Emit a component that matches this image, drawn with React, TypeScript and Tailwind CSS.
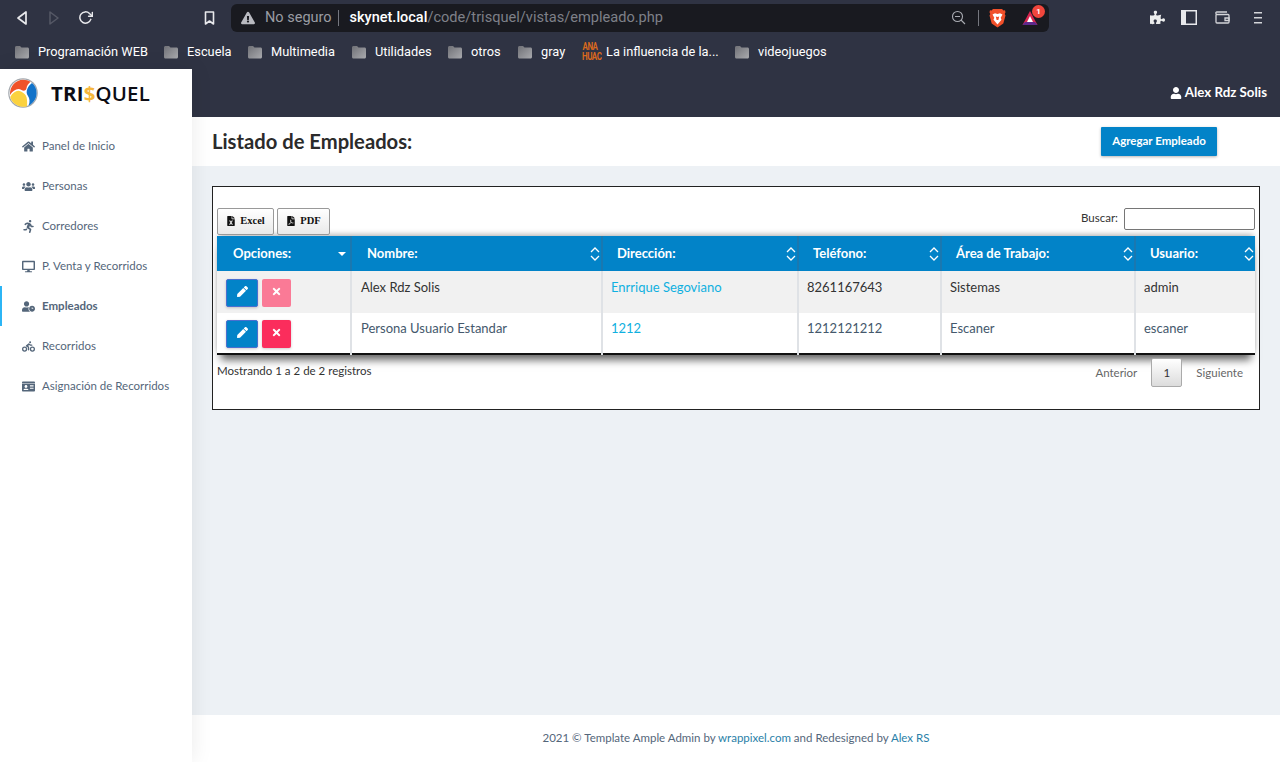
import {
  FaHome,
  FaUsers,
  FaRunning,
  FaDesktop,
  FaUserClock,
  FaBiking,
  FaIdCard,
  FaUser,
  FaPen,
  FaTimes,
  FaFileExcel,
  FaFilePdf,
  FaPuzzlePiece,
  FaExclamationTriangle,
} from "react-icons/fa";
import { FiRotateCw } from "react-icons/fi";

const bookmarks = [
  { label: "Programación WEB", width: "w-[149px]" },
  { label: "Escuela", width: "w-[84px]" },
  { label: "Multimedia", width: "w-[104px]" },
  { label: "Utilidades", width: "w-[96px]" },
  { label: "otros", width: "w-[70px]" },
];

const menu = [
  { label: "Panel de Inicio", icon: FaHome },
  { label: "Personas", icon: FaUsers },
  { label: "Corredores", icon: FaRunning },
  { label: "P. Venta y Recorridos", icon: FaDesktop },
  { label: "Empleados", icon: FaUserClock, active: true },
  { label: "Recorridos", icon: FaBiking },
  { label: "Asignación de Recorridos", icon: FaIdCard },
];

const columns = [
  { label: "Opciones:", width: "w-[134px]", pad: "pl-[16px]", sorted: true },
  { label: "Nombre:", width: "w-[251px]", pad: "border-l-2 border-[#1a78b0] pl-[15px]" },
  { label: "Dirección:", width: "w-[196px]", pad: "border-l-2 border-[#1a78b0] pl-[14px]" },
  { label: "Teléfono:", width: "w-[143px]", pad: "border-l-2 border-[#1a78b0] pl-[14px]" },
  { label: "Área de Trabajo:", width: "w-[194px]", pad: "border-l-2 border-[#1a78b0] pl-[14px]" },
  { label: "Usuario:", width: "w-[120px]", pad: "border-l-2 border-[#1a78b0] pl-[14px]" },
];

const rows = [
  {
    nombre: "Alex Rdz Solis",
    direccion: "Enrrique Segoviano",
    telefono: "8261167643",
    area: "Sistemas",
    usuario: "admin",
  },
  {
    nombre: "Persona Usuario Estandar",
    direccion: "1212",
    telefono: "1212121212",
    area: "Escaner",
    usuario: "escaner",
  },
];

function SortIcon() {
  return (
    <svg width="10" height="16" viewBox="0 0 10 16" fill="none" stroke="white" strokeWidth="1.3" className="absolute right-[1px] top-[10px]">
      <path d="M1 6l4-4 4 4" />
      <path d="M1 10l4 4 4-4" />
    </svg>
  );
}

function Folder() {
  return (
    <svg width="16" height="14" viewBox="0 0 16 14" className="shrink-0">
      <defs>
        <linearGradient id="folderFill" x1="0" y1="0" x2="1" y2="1">
          <stop offset="0" stopColor="#6f7076" />
          <stop offset="1" stopColor="#a9aaae" />
        </linearGradient>
      </defs>
      <path d="M1 2.500C1 1.700 1.600 1 2.500 1h3.500l1.500 1.500h6c.9 0 1.500.6 1.500 1.500v8c0 .9-.6 1.500-1.500 1.500h-11C1.600 13.500 1 12.900 1 12z" fill="url(#folderFill)" />
    </svg>
  );
}

function Logo() {
  return (
    <svg width="30" height="30" viewBox="0 0 30 30">
      <circle cx="15" cy="15" r="14.800" fill="#a3a8ae" />
      <circle cx="15" cy="15" r="13.600" fill="white" />
      <path d="M2 17C1.500 8 8 2 15 1.800c3 0 5.500.7 7.500 2-2 1.700-3.800 4-4 6.500-.2 2.500-3 3.200-5 1.700-4-2.500-8.500.5-11.500 5z" fill="#f0532a" />
      <path d="M24 5c3 2.500 4.800 6 4.600 10.500-.2 5.500-3.500 10-8.100 12 1.700-3.500 1.200-7-.5-9.500-2-2.700-1.500-5-.5-7.500.8-2 2.500-4 4.500-5.500z" fill="#1273c9" />
      <path d="M2.200 19c3-5 7-7.500 10.800-5.500 3 1.500 4.800 3 5.600 6 .6 2.800.7 5.500.4 8.700-2 .6-4.500.7-6.500.2C8 27.500 3.500 24 2.200 19z" fill="#fbd23f" />
    </svg>
  );
}

function Brave() {
  return (
    <svg width="17" height="20" viewBox="0 0 17 20">
      <path d="M4 1h9l1.500 1.500 1.500-.3.5 2-.8 1.800.8 1.500-2.200 8-5.800 4-5.800-4L.5 7.500l.8-1.500L.5 4.200l.5-2 1.500.3z" fill="#f1502a" />
      <path d="M3.500 6.500l2.500-1.200 2.500.7 2.500-.7 2.500 1.200-1.800 3.200.8 2L8.500 16.500 4.500 11.700l.8-2z" fill="#fff" />
      <path d="M6.800 8.500l1.700.6 1.700-.6-.8 3.500h-1.800z" fill="#f1502a" />
    </svg>
  );
}

function ChromeBars() {
  return (
    <div className="bg-[#2f3343] h-[69px] text-white">
      <div className="flex items-center h-[35px]">
        <div className="flex items-center w-[231px] pl-[16px]">
          <svg width="12" height="16" viewBox="0 0 12 16" fill="none" stroke="#e8e9ec" strokeWidth="1.7" strokeLinejoin="round">
            <path d="M10 2v12L2 8z" />
          </svg>
          <svg width="12" height="16" viewBox="0 0 12 16" fill="none" stroke="#565966" strokeWidth="1.5" strokeLinejoin="round" className="ml-[20px]">
            <path d="M2 2v12l8-6z" />
          </svg>
          <FiRotateCw className="ml-[18px] text-[15px] text-[#e8e9ec]" strokeWidth={2.4} />
          <svg width="11" height="14" viewBox="0 0 11 14" fill="none" stroke="#e8e9ec" strokeWidth="1.6" strokeLinejoin="round" className="ml-[111px]">
            <path d="M1.500 1h8v12l-4-3-4 3z" />
          </svg>
        </div>
        <div className="flex items-center w-[818px] h-[28px] rounded-[6px] bg-[#191a20] font-['Roboto',sans-serif] text-[14px]">
          <FaExclamationTriangle className="ml-[10px] text-[14px] text-[#b9bac0]" />
          <span className="ml-[10px] text-[#9a9ca3] text-[14.500px]">No seguro</span>
          <span className="ml-[6px] w-px h-[16px] bg-[#75777f]"></span>
          <span className="ml-[11px] text-white font-medium text-[14.500px]">skynet.local</span>
          <span className="text-[#7e8088] text-[14.600px]">/code/trisquel/vistas/empleado.php</span>
          <span className="flex-1"></span>
          <svg width="15" height="15" viewBox="0 0 15 15" fill="none" stroke="#a9abb2" strokeWidth="1.1" className="-ml-[2px]">
            <circle cx="6.500" cy="6.500" r="5" />
            <path d="M4 6.500h5M10 10l4 4" />
          </svg>
          <span className="ml-[12px] w-px h-[16px] bg-[#75777f]"></span>
          <span className="ml-[10px] flex">
            <Brave />
          </span>
          <span className="relative ml-[16px] mr-[11px] flex">
            <svg width="16" height="16" viewBox="0 0 16 16">
              <path d="M8 1l7.500 14H.5z" fill="#d8264f" />
              <path d="M.5 15l2.500-3h10l2.500 3z" fill="#5d2a8c" />
              <path d="M8 6l3 6H5z" fill="white" />
            </svg>
            <span className="absolute -right-[7px] -top-[5px] w-[13px] h-[13px] rounded-full bg-[#f0463c] text-white text-[8px] leading-[13px] text-center font-bold">1</span>
          </span>
        </div>
        <FaPuzzlePiece className="ml-[101px] text-[15px] text-[#eceded]" />
        <svg width="16" height="15" viewBox="0 0 16 15" className="ml-[16px]">
          <rect x=".75" y=".75" width="14.500" height="13.500" fill="none" stroke="#e8e9ec" strokeWidth="1.500" />
          <rect x="1" y="1" width="4" height="13" fill="#e8e9ec" />
        </svg>
        <svg width="15" height="13" viewBox="0 0 15 13" fill="none" stroke="#d4d5d9" strokeWidth="1.300" className="ml-[18px]">
          <path d="M1 3.500V11a1 1 0 001 1h11a1 1 0 001-1V4.500a1 1 0 00-1-1H2a1 1 0 01-1-1 1 1 0 011-1.500h10" />
          <path d="M10 7h4v2.500h-4z" />
        </svg>
        <svg width="12" height="12" viewBox="0 0 12 12" fill="#d4d5d9" className="ml-[22px]">
          <rect x="2" y="0" width="8" height="1.500" />
          <rect x="2" y="5" width="8" height="1.500" />
          <rect x="2" y="10" width="8" height="1.500" />
        </svg>
      </div>
      <div className="flex items-center h-[34px] pl-[14px] font-['Roboto',sans-serif] text-[12.800px] text-white">
        {bookmarks.map((b) => (
          <div key={b.label} className={`flex items-center ${b.width}`}>
            <Folder />
            <span className="ml-[8px] whitespace-nowrap">{b.label}</span>
          </div>
        ))}
        <div className="flex items-center w-[65px]">
          <Folder />
          <span className="ml-[8px]">gray</span>
        </div>
        <div className="flex items-center w-[152px]">
          <div className="w-[16px] text-[8px] leading-[8px] tracking-[-0.5px] font-bold text-[#d9691e] text-center scale-y-125">ANA<br />HUAC</div>
          <span className="ml-[8px] whitespace-nowrap">La influencia de la...</span>
        </div>
        <Folder />
        <span className="ml-[8px]">videojuegos</span>
      </div>
    </div>
  );
}

function Sidebar() {
  return (
    <aside className="w-[192px] shrink-0 bg-white shadow-[1px_0_20px_rgba(0,0,0,0.08)] z-10">
      <div className="flex items-center h-[48px] pl-[8px]">
        <Logo />
        <span className="ml-[13px] font-['Open_Sans',sans-serif] text-[20.400px] font-bold tracking-[0.2px] text-[#0c0c14]">
          TRI<span className="text-[#f6b73c]">$</span>
          <span className="font-semibold">QUEL</span>
        </span>
      </div>
      <nav className="pt-[9px]">
        {menu.map((m) => (
          <a
            key={m.label}
            className={`flex items-center h-[40px] text-[11.500px] text-[#54667a] ${
              m.active ? "border-l-2 border-[#2cb5f5] pl-[19px] font-bold" : "pl-[21px]"
            }`}
          >
            <span className="flex justify-center w-[14px] text-[13px]">
              <m.icon />
            </span>
            <span className="ml-[7px]">{m.label}</span>
          </a>
        ))}
      </nav>
    </aside>
  );
}

function ActionButtons({ faded }: { faded: boolean }) {
  return (
    <div className="flex gap-[4px]">
      <button className="flex items-center justify-center pb-[4px] w-[32px] h-[28px] rounded-[2px] bg-[#0283c8] border border-[#4a6fd0] text-white text-[11px] shadow-[0_1px_3px_rgba(0,0,0,0.2)]">
        <FaPen />
      </button>
      <button
        className={`flex items-center justify-center pb-[4px] w-[29px] h-[28px] rounded-[2px] text-white text-[11px] ${
          faded ? "bg-[#fa7a96]" : "bg-[#fb2d5c] shadow-[0_1px_3px_rgba(0,0,0,0.2)]"
        }`}
      >
        <FaTimes />
      </button>
    </div>
  );
}

function EmployeesTable() {
  return (
    <div className="border border-[#222] bg-white mx-[20px] mt-[20px] h-[224px] px-[4px] pt-[21px]">
      <div className="flex justify-between items-start h-[28px]">
        <div className="flex gap-[3px] font-['Liberation_Serif',serif] font-bold text-[10.500px] text-[#111]">
          <button className="flex items-center justify-center gap-[4px] pb-[1px] w-[57px] h-[27px] border border-[#999] rounded-[2px] bg-gradient-to-b from-white to-[#e9e9e9]">
            <FaFileExcel className="text-[10px]" /> Excel
          </button>
          <button className="flex items-center justify-center gap-[4px] pb-[1px] w-[53px] h-[27px] border border-[#999] rounded-[2px] bg-gradient-to-b from-white to-[#e9e9e9]">
            <FaFilePdf className="text-[10px]" /> PDF
          </button>
        </div>
        <label className="flex items-center text-[11.500px] text-[#333]">
          <span className="pb-[2px]">Buscar:</span>
          <input className="ml-[6px] w-[131px] h-[22px] border border-[#767676] rounded-[2px] bg-white" />
        </label>
      </div>
      <table className="table-fixed w-[1038px] border-b-2 border-[#111] text-[13px] shadow-[0_-3px_6px_-2px_rgba(0,0,0,0.35),0_9px_8px_-4px_rgba(0,0,0,0.6)] border-collapse">
        <thead>
          <tr className="h-[35px] bg-[#0283c8] text-white text-left">
            {columns.map((c) => (
              <th key={c.label} className={`relative ${c.width} p-0 ${c.pad} font-bold text-[13px]`}>
                {c.label}
                {c.sorted ? (
                  <span className="absolute right-[4px] top-[16px] w-0 h-0 border-x-[4px] border-x-transparent border-t-[4px] border-t-white"></span>
                ) : (
                  <SortIcon />
                )}
              </th>
            ))}
          </tr>
        </thead>
        <tbody>
          {rows.map((r, i) => {
            const pad = i === 0 ? "pt-[7px]" : "pt-[6px]";
            const cell = `align-top pl-[8px] ${pad} border-l-2 border-[#dfe2e6]`;
            return (
              <tr key={r.usuario} className={i === 0 ? "bg-[#f1f1f1] text-[#333] h-[42px]" : "bg-white text-[#44586c] h-[41px]"}>
                <td className={`align-top pl-[9px] ${i === 0 ? "pt-[8px]" : "pt-[7px]"}`}>
                  <ActionButtons faded={i === 0} />
                </td>
                <td className={`${cell} pl-[9px]`}>{r.nombre}</td>
                <td className={`${cell} text-[#0fb0e0]`}>{r.direccion}</td>
                <td className={cell}>{r.telefono}</td>
                <td className={cell}>{r.area}</td>
                <td className={cell}>{r.usuario}</td>
              </tr>
            );
          })}
        </tbody>
      </table>
      <div className="flex justify-between items-start">
        <span className="mt-[7px] text-[11.500px] text-[#333]">Mostrando 1 a 2 de 2 registros</span>
        <div className="flex items-center mt-[3px] text-[11.500px] text-[#666]">
          <span>Anterior</span>
          <span className="ml-[14px] flex items-center justify-center w-[31px] h-[29px] border border-[#aaa] rounded-[2px] bg-gradient-to-b from-white to-[#dcdcdc] text-[#333]">1</span>
          <span className="ml-[14px] mr-[12px]">Siguiente</span>
        </div>
      </div>
    </div>
  );
}

export default function App() {
  return (
    <div className="flex flex-col h-[762px] overflow-hidden font-['Lato',sans-serif]">
      <ChromeBars />
      <div className="flex flex-1 min-h-0">
        <Sidebar />
        <main className="flex flex-col flex-1 bg-[#edf1f5]">
          <header className="flex items-center justify-end h-[48px] bg-[#2f3343] pr-[13px] text-white text-[13.300px] font-bold">
            <FaUser className="mr-[3px] text-[12px]" /> Alex Rdz Solis
          </header>
          <div className="flex items-center justify-between h-[49px] bg-white pl-[20px] pr-[63px]">
            <h1 className="text-[20.200px] font-bold text-[#2b2b2b]">Listado de Empleados:</h1>
            <button className="w-[116px] h-[29px] pb-[2px] rounded-[1px] bg-[#0283c8] text-white text-[11.500px] font-bold shadow-[0_1px_3px_rgba(0,0,0,0.3)]">
              Agregar Empleado
            </button>
          </div>
          <div className="flex-1">
            <EmployeesTable />
          </div>
          <footer className="flex items-center justify-center h-[47px] pb-[2px] bg-white text-[11.500px] text-[#54667a]">
            <span>
              2021 © Template Ample Admin by <a className="text-[#2a7fa8]">wrappixel.com</a> and Redesigned by <a className="text-[#2a7fa8]">Alex RS</a>
            </span>
          </footer>
        </main>
      </div>
    </div>
  );
}
